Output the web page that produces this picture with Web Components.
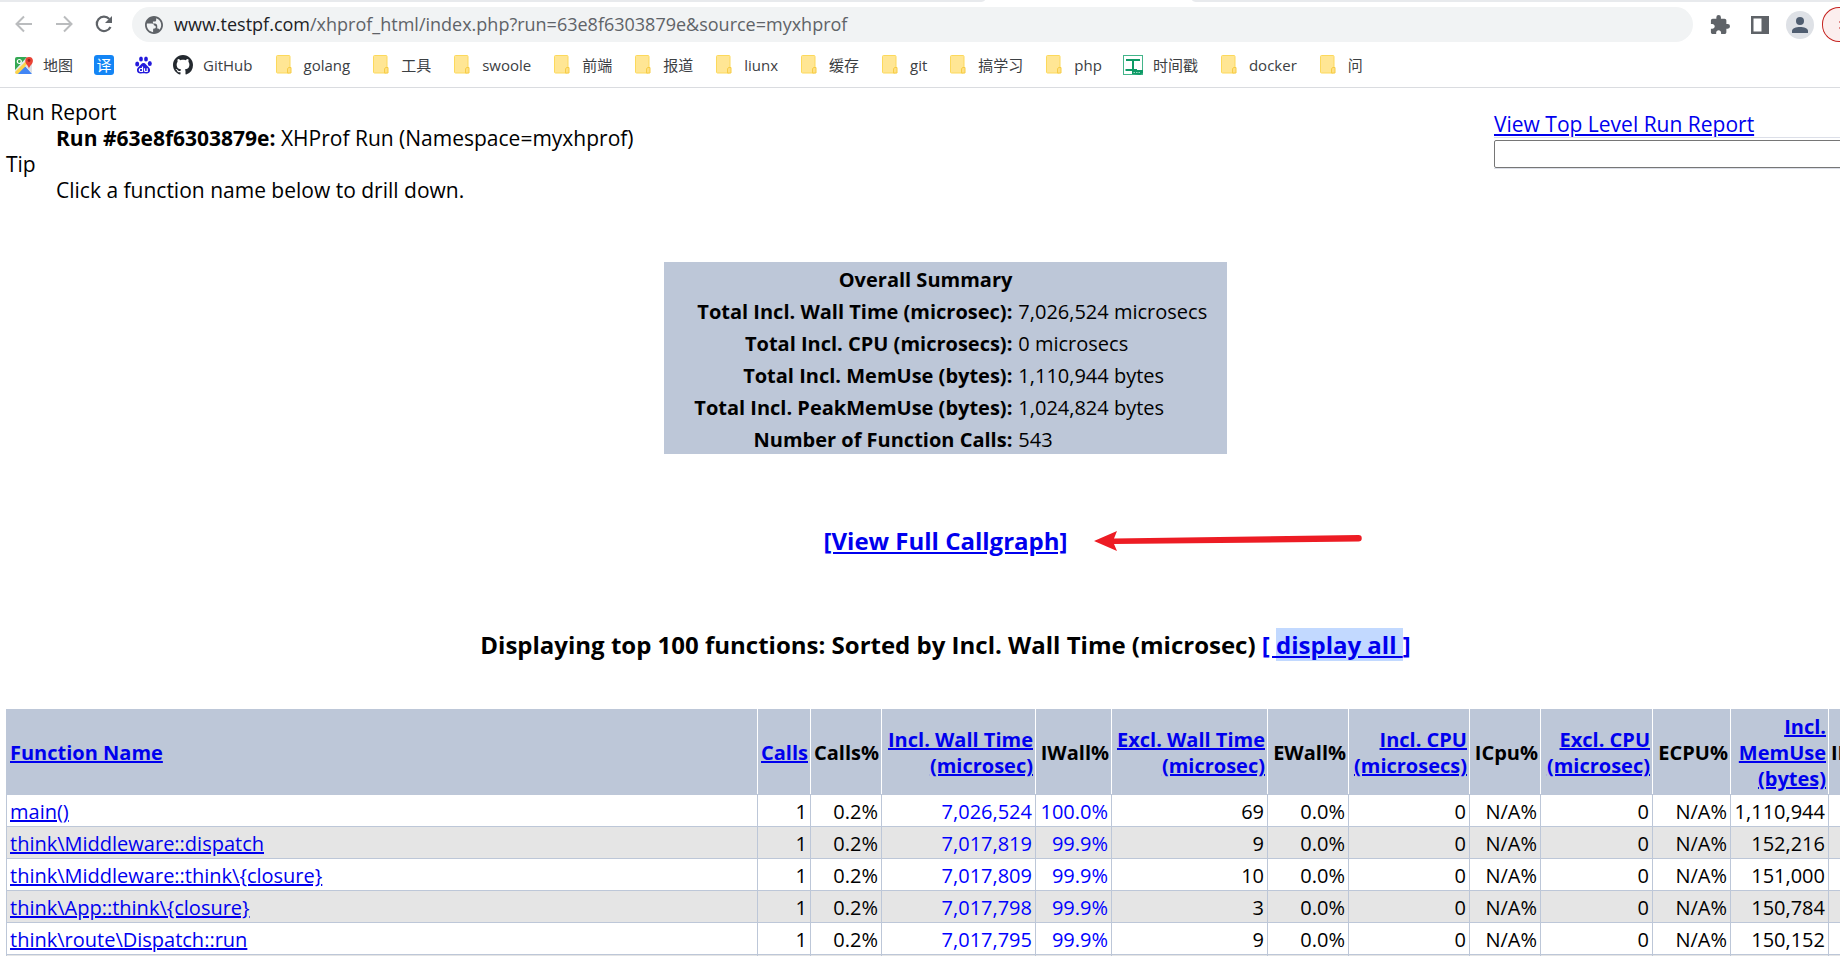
<!DOCTYPE html>
<html lang="zh-CN">
<head>
<meta charset="utf-8">
<title>XHProf: Hierarchical Profiler Report</title>
<style>
  html, body { margin: 0; background: #fff; }
  body { min-height: 100vh; overflow: hidden; font-family: "Open Sans", "Noto Sans CJK SC", sans-serif; color: #000; }
</style>
</head>
<body>
<browser-toolbar></browser-toolbar>
<bookmark-bar>
  <bookmark-item icon="maps">地图</bookmark-item>
  <bookmark-item icon="translate" label="翻译"></bookmark-item>
  <bookmark-item icon="baidu" label="百度"></bookmark-item>
  <bookmark-item icon="github">GitHub</bookmark-item>
  <bookmark-item icon="folder">golang</bookmark-item>
  <bookmark-item icon="folder">工具</bookmark-item>
  <bookmark-item icon="folder">swoole</bookmark-item>
  <bookmark-item icon="folder">前端</bookmark-item>
  <bookmark-item icon="folder">报道</bookmark-item>
  <bookmark-item icon="folder">liunx</bookmark-item>
  <bookmark-item icon="folder">缓存</bookmark-item>
  <bookmark-item icon="folder">git</bookmark-item>
  <bookmark-item icon="folder">搞学习</bookmark-item>
  <bookmark-item icon="folder">php</bookmark-item>
  <bookmark-item icon="tool">时间戳</bookmark-item>
  <bookmark-item icon="folder">docker</bookmark-item>
  <bookmark-item icon="folder">问</bookmark-item>
</bookmark-bar>
<report-page>
  <run-report slot="intro"></run-report>
  <overall-summary></overall-summary>
  <callgraph-link>[View Full Callgraph]</callgraph-link>
  <list-heading>Displaying top 100 functions: Sorted by Incl. Wall Time (microsec)</list-heading>
  <function-table></function-table>
</report-page>

<script>
const define = (name, html, setup) => {
  const template = document.createElement('template');
  template.innerHTML = html;
  customElements.define(name, class extends HTMLElement {
    constructor() {
      super();
      this.attachShadow({ mode: 'open' }).append(template.content.cloneNode(true));
    }
    connectedCallback() { if (setup) setup(this, this.shadowRoot); }
  });
};

define('browser-toolbar', `
<style>
  :host { display: block; background: #fff; }
  .tabs { display: grid; grid-template-columns: 985px 207px 1fr; height: 2px; background: #fff; }
  .tabs i { background: #e8eaed; }
  .tabs i:first-child { border-bottom-right-radius: 6px 2px; }
  .tabs i:last-child { grid-column: 3; border-bottom-left-radius: 6px 2px; }
  .bar { display: flex; align-items: center; height: 35px; padding: 5px 0 0 14px; overflow: hidden; }
  button { display: flex; align-items: center; justify-content: center; flex: none; border: 0; padding: 0; background: none; }
  .nav { width: 20px; height: 20px; margin-right: 20px; }
  .nav:nth-of-type(3) { margin-right: 18px; }
  form { flex: 1; display: flex; align-items: center; gap: 11px; height: 35px; box-sizing: border-box; padding-left: 13px; border-radius: 18px; background: #f1f3f4; }
  .url { padding-bottom: 2px; font-size: 18px; line-height: 24px; color: #5f6368; white-space: nowrap; }
  .url b { font-weight: 400; color: #202124; }
  .ext { width: 20px; height: 20px; margin-left: 17px; }
  .panel { width: 20px; height: 20px; margin-left: 20px; }
  .user { width: 28px; height: 28px; margin-left: 16px; border-radius: 14px; background: #dee1e6; }
  .update { box-sizing: border-box; justify-content: flex-start; width: 18px; height: 35px; margin-left: 8px; padding-left: 16px; border: 1px solid #c5221f; border-right: 0; border-radius: 17px 0 0 17px; background: #fceeee; }
  svg { display: block; }
</style>
<div class="tabs"><i></i><i></i></div>
<div class="bar">
  <button class="nav" aria-label="Back"><svg width="20" height="20" viewBox="0 0 20 20" fill="none" stroke="#babcbe" stroke-width="2"><path d="M18 9H3M10 1.500L2.500 9l7.500 7.500"/></svg></button>
  <button class="nav" aria-label="Forward"><svg width="20" height="20" viewBox="0 0 20 20" fill="none" stroke="#babcbe" stroke-width="2"><path d="M2 9h15M10 1.500L17.500 9L10 16.500"/></svg></button>
  <button class="nav" aria-label="Reload"><svg width="20" height="20" viewBox="0 0 20 20"><path d="M16.500 12a7.200 7.200 0 1 1-1.200-8" fill="none" stroke="#5f6368" stroke-width="2.200"/><path d="M18 1v7h-7z" fill="#5f6368"/></svg></button>
  <form>
    <svg width="18" height="18" viewBox="2 2 20 20"><path fill="#5f6368" d="M12 2C6.480 2 2 6.480 2 12s4.480 10 10 10 10-4.480 10-10S17.520 2 12 2zm-1 17.930c-3.950-.490-7-3.850-7-7.930 0-.620.080-1.210.210-1.790h5.290c1.500 0 2.500 1 2.500 2.300 1.200 0 2 .600 2 1.700s-.900 1.800-1.800 1.800c-.700 0-1.200.500-1.200 1.200zM17.900 17.390c-.260-.810-1-1.390-1.900-1.390h-.400v-3c0-1.500-1.100-2.800-2.600-2.800h-2.200V8.200h2c.800 0 1.600-.700 1.600-1.600V4.600c3.300 1 5.600 4 5.600 7.400 0 2.080-.800 3.970-2.100 5.390z"/></svg>
    <span class="url"><b>www.testpf.com</b>/xhprof_html/index.php?run=63e8f6303879e&amp;source=myxhprof</span>
  </form>
  <button class="ext" aria-label="Extensions"><svg width="20" height="20" viewBox="1 1 22 22"><path fill="#5f6368" d="M20.500 11H19V7c0-1.100-.900-2-2-2h-4V3.500a2.500 2.500 0 0 0-5 0V5H4c-1.100 0-1.990.900-1.990 2v3.800H3.500c1.490 0 2.700 1.210 2.700 2.700s-1.210 2.700-2.700 2.700H2V20c0 1.100.900 2 2 2h3.800v-1.500c0-1.490 1.210-2.700 2.700-2.700s2.700 1.210 2.700 2.700V22H17c1.100 0 2-.900 2-2v-4h1.500a2.500 2.500 0 0 0 0-5z"/></svg></button>
  <button class="panel" aria-label="Side panel"><svg width="20" height="20" viewBox="0 0 20 20"><path fill="#5f6368" fill-rule="evenodd" d="M1 1h18v18H1zM3.500 3.500v13h8v-13z"/></svg></button>
  <button class="user" aria-label="Profile"><svg width="18" height="18" viewBox="0 0 18 18" fill="#4f5d70"><circle cx="9" cy="5" r="4"/><path d="M1 17v-2c0-2.700 4-4 8-4s8 1.300 8 4v2z"/></svg></button>
  <button class="update" aria-label="Update"><svg width="2" height="14" viewBox="0 0 2 14"><path d="M0 1h2M0 13h2" stroke="#c5221f" stroke-width="2"/></svg></button>
</div>`);

define('bookmark-bar', `
<style>
  :host { display: flex; align-items: center; gap: 21px; height: 45px; padding-left: 15px; border-bottom: 1px solid #dadce0; overflow: hidden; background: #fff; }
</style><slot></slot>`);

const icons = {
  folder: '<svg width="16" height="19" viewBox="0 0 16 19"><rect x=".5" y=".5" width="13.500" height="17.500" rx="1" fill="#ffe694" stroke="#fcd95c"/><path d="M12.500 12.500h2.500v5.500h-3.500v-4z" fill="#ffe082" stroke="#f6cc45"/></svg>',
  maps: '<svg width="18" height="18" viewBox="0 0 18 18"><rect y="1" width="17" height="17" rx="2" fill="#e8eaed"/><path d="M0 3a2 2 0 0 1 2-2h10L0 14z" fill="#34a853"/><path d="M3 18L10 10l7 8z" fill="#4285f4"/><path d="M0 16L13 3l2.500 2.500L3 18H2a2 2 0 0 1-2-2z" fill="#fbd34d"/><path d="M3 18L9.500 11.500L16 18z" fill="#4285f4"/><path d="M10 10l7 7v-9l-3-2z" fill="#dfe1e5"/><circle cx="4.300" cy="5.500" r="2" fill="none" stroke="#fff" stroke-width="1.200"/><path d="M14 13c0-3-3.700-4.500-3.700-8.200a3.800 3.800 0 0 1 7.600 0C17.900 8.500 14 10 14 13z" fill="#ea4335"/><circle cx="14" cy="4.500" r="1.400" fill="#9f2219"/></svg>',
  translate: '<span class="yi">译</span>',
  baidu: '<svg width="17" height="18" viewBox="0 0 17 18" fill="#2319dc"><ellipse cx="2.200" cy="8" rx="2" ry="2.500"/><ellipse cx="6" cy="3" rx="1.900" ry="2.600"/><ellipse cx="11" cy="3" rx="1.900" ry="2.600"/><ellipse cx="14.800" cy="7.500" rx="2" ry="2.500"/><path d="M8.500 7c2 0 2.800 2 4.200 3.300 1.500 1.300 2.600 2.400 2.300 4.500-.300 2-1.800 2.900-4 2.700-1.500-.200-3.500-.200-5 0-2.200.200-3.700-.700-4-2.700-.300-2.100.800-3.200 2.300-4.500C5.700 9 6.500 7 8.500 7z"/><path d="M7.500 10.500v5H5.800a1.500 1.500 0 0 1 0-3h1.700M9.500 12.300v2.200a1 1 0 0 0 1 1h1.700v-3.200" fill="none" stroke="#fff" stroke-width="1.200"/></svg>',
  github: '<svg width="20" height="20" viewBox="0 0 16 16"><path fill="#24292f" d="M8 0C3.580 0 0 3.580 0 8c0 3.540 2.290 6.530 5.470 7.590.400.070.550-.170.550-.380 0-.190-.010-.820-.010-1.490-2.010.370-2.530-.490-2.690-.940-.090-.230-.480-.940-.820-1.130-.280-.150-.680-.520-.010-.530.630-.010 1.080.580 1.230.820.720 1.210 1.870.870 2.330.660.070-.520.280-.870.510-1.070-1.780-.200-3.640-.890-3.640-3.950 0-.870.310-1.590.820-2.150-.080-.200-.360-1.020.080-2.120 0 0 .670-.210 2.200.820.640-.180 1.320-.270 2-.270s1.360.090 2 .270c1.530-1.040 2.200-.820 2.200-.820.440 1.100.160 1.920.080 2.120.510.560.820 1.270.820 2.150 0 3.070-1.870 3.750-3.650 3.950.290.250.540.730.540 1.480 0 1.070-.010 1.930-.010 2.200 0 .210.150.460.550.380A8.010 8.010 0 0 0 16 8c0-4.420-3.580-8-8-8z"/></svg>',
  tool: '<svg width="20" height="20" viewBox="0 0 20 20"><rect x=".5" y=".5" width="19" height="19" fill="#fff" stroke="#43b58a"/><path d="M3 5h14M10 5v10M2.500 15H14" fill="none" stroke="#0e9a66" stroke-width="2"/><path d="M9 15h11v3l-3 2-8-1z" fill="#0e9a66"/><path d="M10.500 17.500h7" stroke="#9adbc2" stroke-dasharray="1.500 1"/></svg>'
};
define('bookmark-item', `
<style>
  :host { display: block; flex: none; }
  :host([icon="folder"]) { margin-left: 2px; }
  a { display: flex; align-items: center; gap: 10px; color: #3c4043; font-size: 15px; line-height: 20px; text-decoration: none; white-space: nowrap; }
  a.folder { gap: 12px; }
  a.bare { gap: 0; }
  svg { display: block; flex: none; }
  .yi { display: block; width: 20px; height: 20px; border-radius: 3px; background: #1485f5; color: #fff; font-size: 15px; line-height: 20px; text-align: center; }
</style>
<a href="#"><span id="icon"></span><slot></slot></a>`, (el, root) => {
  const kind = el.getAttribute('icon');
  const link = root.querySelector('a');
  root.getElementById('icon').innerHTML = icons[kind];
  link.classList.add(kind);
  if (el.hasAttribute('label')) {
    link.classList.add('bare');
    link.setAttribute('aria-label', el.getAttribute('label'));
  }
});

/* The report is a little wider than the window, so its centre sits right of the window's. */
define('report-page', `
<style>
  :host { display: block; padding: 11px 0 0 6px; }
  .wide { width: calc(100% + 45px); }
</style>
<slot name="intro"></slot>
<div class="wide"><slot></slot></div>`);

define('run-report', `
<style>
  :host { display: grid; grid-template-columns: 1fr 346px; font-size: 21px; line-height: 26px; }
  dl { margin: 0; }
  dd { margin: 0 0 0 50px; }
  .side { padding-top: 12px; }
  a { display: block; width: max-content; color: #00e; }
  .box { width: calc(100% + 40px); box-sizing: border-box; padding: 2px 0 0; border: solid #dcdfe8; border-width: 1px 0; }
  input { display: block; box-sizing: border-box; width: 100%; height: 28px; border: 1px solid #767676; border-radius: 2px; padding: 2px 4px; font: inherit; }
</style>
<dl>
  <dt>Run Report</dt>
  <dd><b>Run #63e8f6303879e:</b> XHProf Run (Namespace=myxhprof)</dd>
  <dt>Tip</dt>
  <dd>Click a function name below to drill down.</dd>
</dl>
<div class="side">
  <a href="#">View Top Level Run Report</a>
  <div class="box"><input type="text" aria-label="Function name"></div>
</div>`);

define('overall-summary', `
<style>
  :host { display: block; margin-top: 59px; }
  table { width: 30%; margin: 0 auto; border-collapse: collapse; table-layout: fixed; background: #bdc7d8; font-size: 20px; line-height: 26px; }
  col:last-child { width: 212px; }
  th, td { padding: 5px 3px 1px; white-space: nowrap; }
  th { text-align: right; font-weight: 700; }
</style>
<table>
  <colgroup><col><col></colgroup>
  <tr><th>Overall Summary</th><td></td></tr>
  <tr><th>Total Incl. Wall Time (microsec):</th><td>7,026,524 microsecs</td></tr>
  <tr><th>Total Incl. CPU (microsecs):</th><td>0 microsecs</td></tr>
  <tr><th>Total Incl. MemUse (bytes):</th><td>1,110,944 bytes</td></tr>
  <tr><th>Total Incl. PeakMemUse (bytes):</th><td>1,024,824 bytes</td></tr>
  <tr><th>Number of Function Calls:</th><td>543</td></tr>
</table>`);

define('callgraph-link', `
<style>
  :host { display: block; margin-top: 71px; text-align: center; }
  h3 { display: inline-block; position: relative; margin: 0; font-size: 24px; line-height: 32px; }
  a { color: #00e; }
  svg { position: absolute; left: 100%; top: 4px; margin-left: 27px; }
</style>
<h3><a href="#"><slot></slot></a>
<svg width="270" height="24" viewBox="0 0 270 24" fill="#ed1c24" aria-hidden="true"><path d="M0 12L23 2l-3 7.500L264.500 6a3 3 0 0 1 0 6.500L20 15l3 7z"/></svg></h3>`);

define('list-heading', `
<style>
  :host { display: block; margin-top: 72px; }
  h3 { margin: 0; text-align: center; font-size: 24px; line-height: 32px; white-space: nowrap; }
  a { color: #00e; }
  mark { background: #c2d9ff; color: inherit; }
</style>
<h3><slot></slot> <a href="#">[ <mark>display all </mark>]</a></h3>`);

const columns = [
  ['Function Name', '', 1], ['Calls', 53, 1], ['Calls%', 71], ['Incl. Wall Time<br>(microsec)', 154, 1], ['IWall%', 76],
  ['Excl. Wall Time<br>(microsec)', 156, 1], ['EWall%', 81], ['Incl. CPU<br>(microsecs)', 121, 1], ['ICpu%', 71],
  ['Excl. CPU<br>(microsec)', 112, 1], ['ECPU%', 78], ['Incl.<br>MemUse<br>(bytes)', 98, 1], ['IMemUse%', 104]
];
const rows = [
  ['main()', '7,026,524', '100.0%', '69', '1,110,944'],
  ['think\\Middleware::dispatch', '7,017,819', '99.9%', '9', '152,216'],
  ['think\\Middleware::think\\{closure}', '7,017,809', '99.9%', '10', '151,000'],
  ['think\\App::think\\{closure}', '7,017,798', '99.9%', '3', '150,784'],
  ['think\\route\\Dispatch::run', '7,017,795', '99.9%', '9', '150,152']
];
define('function-table', `
<style>
  :host { display: block; margin-top: 48px; }
  table { width: calc(100% + 48px); border-collapse: collapse; table-layout: fixed; font-size: 20px; line-height: 26px; }
  th, td { padding: 3px 3px 1px; border: 1px solid #bdc7d8; text-align: right; white-space: nowrap; }
  th { height: 80px; padding: 3px 2px 1px; background: #bdc7d8; border-left-color: #fff; border-right-color: #fff; font-weight: 700; }
  td { height: 27px; }
  th:first-child, td:first-child { padding-left: 3px; text-align: left; }
  th:first-child { border-left-color: #bdc7d8; }
  th:last-child { text-align: left; }
  tbody tr:nth-child(even) { background: #e5e5e5; }
  a { color: #00e; }
  .sorted { color: #00f; }
</style>
<table><colgroup></colgroup><thead><tr></tr></thead><tbody></tbody></table>`, (el, root) => {
  root.querySelector('colgroup').innerHTML = columns.map(c => `<col${c[1] ? ` style="width:${c[1]}px"` : ''}>`).join('');
  root.querySelector('thead tr').innerHTML = columns.map(c => `<th>${c[2] ? `<a href="#">${c[0]}</a>` : c[0]}</th>`).join('');
  root.querySelector('tbody').innerHTML = [...rows, null].map(r => r
    ? `<tr><td><a href="#">${r[0]}</a></td><td>1</td><td>0.2%</td><td class="sorted">${r[1]}</td><td class="sorted">${r[2]}</td><td>${r[3]}</td><td>0.0%</td><td>0</td><td>N/A%</td><td>0</td><td>N/A%</td><td>${r[4]}</td><td></td></tr>`
    : `<tr>${'<td></td>'.repeat(13)}</tr>`).join('');
});
</script>
</body>
</html>
